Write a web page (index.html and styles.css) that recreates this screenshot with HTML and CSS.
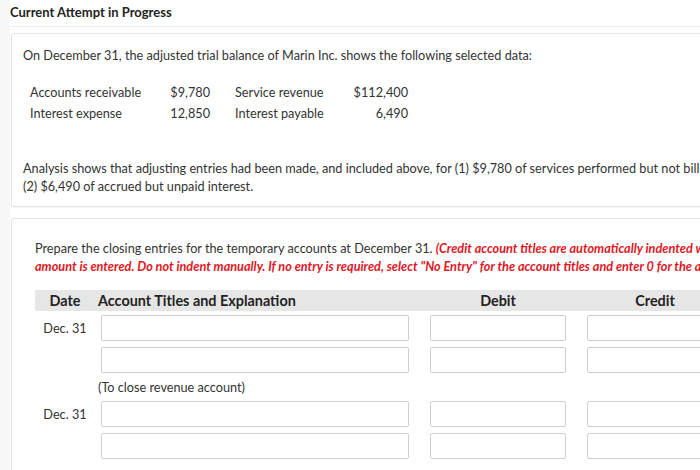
FILE: index.html
```html
<!DOCTYPE html>
<html>
<head>
<meta charset="utf-8">
<link rel="stylesheet" href="styles.css">
</head>
<body>
<div class="page">
  <div class="title">Current Attempt in Progress</div>

  <div class="card card-first">
    <p class="lead">On December 31, the adjusted trial balance of Marin Inc. shows the following selected data:</p>
    <div class="data">
      <span>Accounts receivable</span><span class="num">$9,780</span><span>Service revenue</span><span class="num">$112,400</span>
      <span>Interest expense</span><span class="num">12,850</span><span>Interest payable</span><span class="num">6,490</span>
    </div>
    <p class="analysis">Analysis shows that adjusting entries had been made, and included above, for (1) $9,780 of services performed but not billed and (2) $6,490 of accrued but unpaid interest.</p>
  </div>

  <div class="card card-second">
    <p class="prompt">Prepare the closing entries for the temporary accounts at December 31. <em class="warn">(Credit account titles are automatically indented when amount is entered. Do not indent manually. If no entry is required, select "No Entry" for the account titles and enter 0 for the amounts.)</em></p>

    <div class="journal">
      <div class="jhead">
        <div class="c-date">Date</div>
        <div class="c-acct">Account Titles and Explanation</div>
        <div class="c-amt">Debit</div>
        <div class="c-amt">Credit</div>
      </div>

      <div class="jrow">
        <div class="c-date">Dec. 31</div>
        <div class="c-acct"><input class="in in-acct" type="text"></div>
        <div class="c-amt"><input class="in in-amt" type="text"></div>
        <div class="c-amt"><input class="in in-amt" type="text"></div>
      </div>
      <div class="jrow">
        <div class="c-date"></div>
        <div class="c-acct"><input class="in in-acct" type="text"></div>
        <div class="c-amt"><input class="in in-amt" type="text"></div>
        <div class="c-amt"><input class="in in-amt" type="text"></div>
      </div>
      <div class="note">(To close revenue account)</div>

      <div class="jrow">
        <div class="c-date">Dec. 31</div>
        <div class="c-acct"><input class="in in-acct" type="text"></div>
        <div class="c-amt"><input class="in in-amt" type="text"></div>
        <div class="c-amt"><input class="in in-amt" type="text"></div>
      </div>
      <div class="jrow">
        <div class="c-date"></div>
        <div class="c-acct"><input class="in in-acct" type="text"></div>
        <div class="c-amt"><input class="in in-amt" type="text"></div>
        <div class="c-amt"><input class="in in-amt" type="text"></div>
      </div>
    </div>
  </div>
</div>
</body>
</html>
```

FILE: styles.css
```css
html, body {
  margin: 0;
  padding: 0;
  overflow: hidden;
}
body {
  background: #f7f7f7;
  font-family: Lato, "Open Sans", sans-serif;
  font-size: 12.7px;
  color: #333;
  width: 700px;
  height: 470px;
}
.page {
  margin-left: 10px;
  width: 800px;
  background: #fff;
  min-height: 470px;
}
.title {
  font-weight: 700;
  font-size: 13px;
  color: #222;
  line-height: 24px;
  border-bottom: 1px solid #ececec;
  box-sizing: border-box;
  height: 27px;
}
.card {
  margin-left: 1px;
  border: 1px solid #e2e2e2;
  border-radius: 3px;
  background: #fff;
  box-shadow: 0 1px 1px rgba(0,0,0,0.04);
}
.card-first {
  margin-top: 6px;
  width: 780px;
  padding: 12px 12px 11px 11px;
  box-sizing: border-box;
}
.lead {
  margin: 0;
  line-height: 18px;
}
.data {
  display: grid;
  grid-template-columns: 130px 50px 130px 68px;
  margin: 18px 0 0 7px;
  line-height: 21px;
}
.data span:nth-child(4n+3) {
  padding-left: 25px;
}
.num {
  text-align: right;
}
.analysis {
  margin: 35px 0 0 0;
  line-height: 18px;
  width: 718px;
}
.card-second {
  margin-top: 11px;
  width: 790px;
  padding: 20px 0 10px 23px;
  box-sizing: border-box;
  border-right: none;
}
.prompt {
  margin: 0;
  line-height: 18px;
  width: 730px;
}
.warn {
  color: #e0171f;
  font-weight: 700;
  font-style: italic;
}
.journal {
  margin-top: 15px;
}
.jhead, .jrow {
  display: grid;
  grid-template-columns: 60px 325px 156px 158px;
  align-items: center;
}
.jhead {
  background: #e6e6e6;
  height: 21px;
  font-weight: 700;
  font-size: 14.4px;
  color: #222;
  margin-bottom: 4px;
}
.jhead .c-acct {
  padding-left: 3px;
}
.jrow {
  margin-bottom: 6px;
}
.c-date {
  text-align: center;
}
.c-amt {
  display: flex;
  justify-content: center;
}
.jhead .c-amt {
  display: block;
  text-align: center;
}
.in {
  display: block;
  box-sizing: border-box;
  height: 26px;
  border: 1px solid #cfcfcf;
  border-radius: 2px;
  background: #fff;
  margin: 0;
  padding: 0 6px;
  font: inherit;
}
.in-acct {
  width: 308px;
  margin-left: 6px;
}
.in-amt {
  width: 136px;
}
.note {
  padding-left: 63px;
  line-height: 16px;
  margin: 0 0 6px;
}
```
